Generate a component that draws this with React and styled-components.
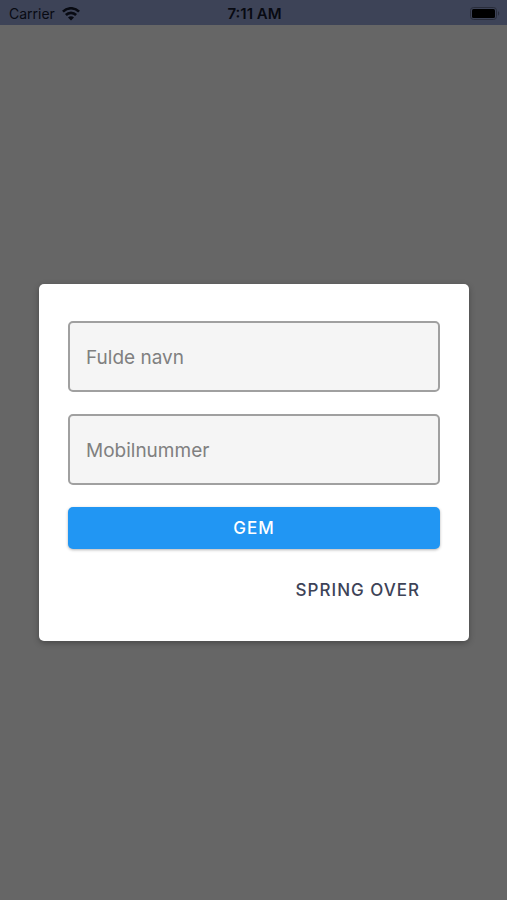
import React, { useState } from "react";
import styled, { createGlobalStyle } from "styled-components";

const GlobalStyle = createGlobalStyle`
  * {
    box-sizing: border-box;
  }

  body {
    margin: 0;
    background: #666666;
    font-family: Inter, "Liberation Sans", sans-serif;
  }
`;

// ================= Layout =================
const Screen = styled.div`
  display: flex;
  flex-direction: column;
  min-height: 100vh;
`;

const Backdrop = styled.main`
  flex: 1;
  display: flex;
  align-items: center;
  justify-content: center;
  padding: 24px 38px 24px 39px;
  background: #666666;
`;

// ================= Status bar =================
const StatusBar = styled.header`
  display: grid;
  grid-template-columns: 1fr auto 1fr;
  align-items: center;
  height: 25px;
  padding: 2px 7px 0 9px;
  background: #3d4357;
  color: #080a12;
  font-size: 14px;
  line-height: 20px;
`;

const Carrier = styled.div`
  display: flex;
  align-items: center;
  gap: 7px;
`;

const Time = styled.time`
  font-size: 15px;
  font-weight: 600;
`;

const BatterySlot = styled.div`
  display: flex;
  justify-content: flex-end;
`;

// ================= Dialog =================
const Dialog = styled.form`
  display: flex;
  flex-direction: column;
  gap: 22px;
  width: 100%;
  padding: 37px 29px 32px;
  background: #ffffff;
  border-radius: 5px;
  box-shadow: 0 2px 6px rgba(0, 0, 0, 0.3);
`;

const Input = styled.input`
  width: 100%;
  height: 71px;
  padding: 2px 16px 0;
  border: 2px solid #a0a0a0;
  border-radius: 5px;
  outline: none;
  background: #f5f5f5;
  color: #222222;
  font-family: inherit;
  font-size: 19px;

  &::placeholder {
    color: #808080;
    opacity: 1;
  }

  &:focus {
    border-color: #2196f3;
  }
`;

const Button = styled.button`
  height: 42px;
  padding: 0 20px;
  border: none;
  border-radius: 5px;
  background: transparent;
  color: #3d4357;
  font-family: inherit;
  font-size: 17px;
  font-weight: 500;
  letter-spacing: 1px;
  text-transform: uppercase;
  cursor: pointer;
`;

const SaveButton = styled(Button)`
  background: #2196f3;
  color: #ffffff;
  box-shadow: 0 1px 3px rgba(0, 0, 0, 0.3);
`;

const SkipButton = styled(Button)`
  align-self: flex-end;
  height: 38px;
`;

// ================= Icons =================
const WifiIcon = () => (
  <svg width="18" height="14" viewBox="0 0 18 14" fill="none" stroke="currentColor" strokeWidth="2.6" aria-hidden="true">
    <path d="M0.9 4.7 C5.3 0.1 12.7 0.1 17.1 4.7" />
    <path d="M3.9 8 C6.7 5.1 11.3 5.1 14.1 8" />
    <path d="M9 13.4 L6 10.4 C7.7 8.9 10.3 8.9 12 10.4 Z" fill="currentColor" stroke="none" />
  </svg>
);

const BatteryIcon = () => (
  <svg width="30" height="14" viewBox="0 0 30 14" aria-hidden="true">
    <rect x="0.5" y="0.5" width="26" height="12" rx="3" fill="none" stroke="#292d3b" />
    <rect x="2" y="2" width="23" height="9" rx="1.5" fill="#000000" />
    <path d="M28 4.3 C29.6 4.8 29.6 8.2 28 8.7 Z" fill="#292d3b" />
  </svg>
);

// ================= Main App =================
const App = () => {
  const [name, setName] = useState("");
  const [phone, setPhone] = useState("");

  const handleSubmit = (e) => {
    e.preventDefault();
  };

  return (
    <Screen>
      <GlobalStyle />
      <StatusBar>
        <Carrier>
          Carrier
          <WifiIcon />
        </Carrier>
        <Time>7:11 AM</Time>
        <BatterySlot>
          <BatteryIcon />
        </BatterySlot>
      </StatusBar>

      <Backdrop>
        <Dialog onSubmit={handleSubmit}>
          <Input
            type="text"
            name="name"
            placeholder="Fulde navn"
            aria-label="Fulde navn"
            value={name}
            onChange={(e) => setName(e.target.value)}
          />
          <Input
            type="tel"
            name="phone"
            placeholder="Mobilnummer"
            aria-label="Mobilnummer"
            value={phone}
            onChange={(e) => setPhone(e.target.value)}
          />
          <SaveButton type="submit">Gem</SaveButton>
          <SkipButton type="button">Spring over</SkipButton>
        </Dialog>
      </Backdrop>
    </Screen>
  );
};

export default App;
